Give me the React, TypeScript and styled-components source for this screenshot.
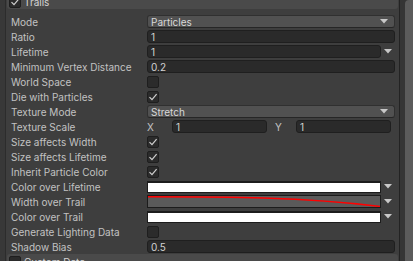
import React from "react";
import styled, { createGlobalStyle } from "styled-components";

const Global = createGlobalStyle`
  html, body { margin: 0; padding: 0; background: #3e3e3e; }
  body { font-family: Inter, "Noto Sans", "Liberation Sans", sans-serif; font-size: 10px; }
  * { box-sizing: border-box; }
`;

const Root = styled.div`
  display: flex;
  width: 413px;
  height: 261px;
  overflow: hidden;
  background: #3e3e3e;
`;

const Gutter = styled.div`
  width: 6px;
  flex: none;
  background: #383838;
  border-right: 1px solid #2c2c2c;
`;

const Main = styled.div`
  flex: 1;
  display: flex;
  flex-direction: column;
  padding: 0 1px;
  min-width: 0;
`;

const ScrollTrack = styled.div`
  width: 14px;
  flex: none;
  display: flex;
  justify-content: flex-end;
  background: #353535;
  border-left: 1px solid #232323;
`;

const ScrollThumb = styled.div`
  width: 8px;
  height: 100%;
  background: #5b5b5b;
  border-radius: 4px 0 0 0;
`;

const Header = styled.div<{ $top?: boolean }>`
  flex: none;
  height: 15px;
  margin-top: ${(p) => (p.$top ? "-6px" : "0")};
  display: flex;
  align-items: center;
  gap: 3px;
  padding-left: 2px;
  background: #4a4a4a;
  border-radius: ${(p) => (p.$top ? "0 0 3px 3px" : "3px 3px 0 0")};
  color: #d4d4d4;
  font-size: 10px;
`;

const List = styled.div`
  display: flex;
  flex-direction: column;
  padding-top: 5px;
`;

const Row = styled.div`
  height: 15px;
  display: grid;
  grid-template-columns: 140px 1fr;
  align-items: center;
  padding-right: 3px;
`;

const Label = styled.div`
  padding-left: 4px;
  color: #c2c2c2;
  white-space: nowrap;
  font-size: 10px;
`;

const Input = styled.div`
  height: 13px;
  display: flex;
  align-items: center;
  padding-left: 3px;
  background: #2a2a2a;
  border: 1px solid #1f1f1f;
  border-radius: 3px;
  color: #d2d2d2;
  font-size: 10px;
`;

const Dropdown = styled.div`
  height: 13px;
  display: flex;
  align-items: center;
  justify-content: space-between;
  padding: 0 6px 0 3px;
  background: #515151;
  border: 1px solid #303030;
  border-bottom-color: #262626;
  border-radius: 3px;
  color: #d8d8d8;
  font-size: 10px;
`;

const WithArrow = styled.div`
  display: grid;
  grid-template-columns: 1fr 14px;
  align-items: center;
`;

const ArrowCell = styled.div`
  display: flex;
  justify-content: center;
  align-items: center;
`;

const Check = styled.div`
  width: 12px;
  height: 12px;
  display: flex;
  align-items: center;
  justify-content: center;
  background: #2b2b2b;
  border: 1px solid #1e1e1e;
  border-radius: 2px;
`;

const Vector = styled.div`
  display: grid;
  grid-template-columns: 25px 1fr 29px 1fr;
  align-items: center;
  margin-right: 4px;
`;

const AxisLabel = styled.div<{ $pad?: number }>`
  color: #c2c2c2;
  padding-left: ${(p) => p.$pad ?? 0}px;
  font-size: 10px;
`;

const ColorSwatch = styled.div`
  height: 12px;
  background: #ffffff;
  border: 1px solid #1c1c1c;
  border-top-width: 2px;
`;

const CurveBox = styled.div`
  height: 13px;
  background: #5a5a5a;
  border: 1px solid #1c1c1c;
  display: flex;
  svg { display: block; }
`;

const Arrow = () => (
  <svg width="8" height="5" viewBox="0 0 8 5">
    <polygon points="0,0 8,0 4,4.5" fill="#c8c8c8" />
  </svg>
);

const Tick = () => (
  <svg width="10" height="10" viewBox="0 0 10 10">
    <path d="M1.5 5.2 L4 7.7 L8.6 2.2" fill="none" stroke="#cfcfcf" strokeWidth="1.2" />
  </svg>
);

const Box = ({ on }: { on?: boolean }) => <Check>{on && <Tick />}</Check>;

const Curve = () => (
  <CurveBox>
    <svg width="100%" height="11" viewBox="0 0 100 11" preserveAspectRatio="none">
      <path
        d="M0 0.8 C 33.3 0.8, 66.6 0.8, 100 10.5"
        fill="none"
        stroke="#ff0000"
        strokeWidth="1.4"
        vectorEffect="non-scaling-stroke"
      />
    </svg>
  </CurveBox>
);

export default function App() {
  return (
    <>
      <Global />
      <Root>
        <Gutter />
        <Main>
          <Header $top>
            <Box on />
            <span>Trails</span>
          </Header>
          <List>
            <Row>
              <Label>Mode</Label>
              <Dropdown>
                <span>Particles</span>
                <Arrow />
              </Dropdown>
            </Row>
            <Row>
              <Label>Ratio</Label>
              <Input>1</Input>
            </Row>
            <Row>
              <Label>Lifetime</Label>
              <WithArrow>
                <Input>1</Input>
                <ArrowCell>
                  <Arrow />
                </ArrowCell>
              </WithArrow>
            </Row>
            <Row>
              <Label>Minimum Vertex Distance</Label>
              <Input>0.2</Input>
            </Row>
            <Row>
              <Label>World Space</Label>
              <Box />
            </Row>
            <Row>
              <Label>Die with Particles</Label>
              <Box on />
            </Row>
            <Row>
              <Label>Texture Mode</Label>
              <Dropdown>
                <span>Stretch</span>
                <Arrow />
              </Dropdown>
            </Row>
            <Row>
              <Label>Texture Scale</Label>
              <Vector>
                <AxisLabel>X</AxisLabel>
                <Input>1</Input>
                <AxisLabel $pad={8}>Y</AxisLabel>
                <Input>1</Input>
              </Vector>
            </Row>
            <Row>
              <Label>Size affects Width</Label>
              <Box on />
            </Row>
            <Row>
              <Label>Size affects Lifetime</Label>
              <Box on />
            </Row>
            <Row>
              <Label>Inherit Particle Color</Label>
              <Box on />
            </Row>
            <Row>
              <Label>Color over Lifetime</Label>
              <WithArrow>
                <ColorSwatch />
                <ArrowCell>
                  <Arrow />
                </ArrowCell>
              </WithArrow>
            </Row>
            <Row>
              <Label>Width over Trail</Label>
              <WithArrow>
                <Curve />
                <ArrowCell>
                  <Arrow />
                </ArrowCell>
              </WithArrow>
            </Row>
            <Row>
              <Label>Color over Trail</Label>
              <WithArrow>
                <ColorSwatch />
                <ArrowCell>
                  <Arrow />
                </ArrowCell>
              </WithArrow>
            </Row>
            <Row>
              <Label>Generate Lighting Data</Label>
              <Box />
            </Row>
            <Row>
              <Label>Shadow Bias</Label>
              <Input>0.5</Input>
            </Row>
          </List>
          <Header>
            <Box />
            <span>Custom Data</span>
          </Header>
        </Main>
        <ScrollTrack>
          <ScrollThumb />
        </ScrollTrack>
      </Root>
    </>
  );
}
